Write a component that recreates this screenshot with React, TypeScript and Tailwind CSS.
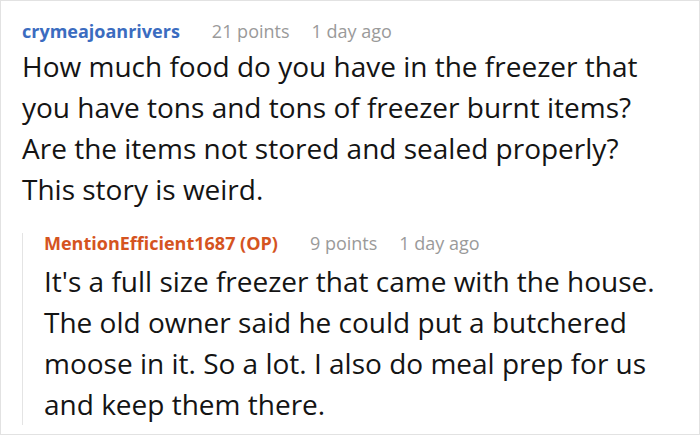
export default function App() {
  return (
    <div
      className="w-[700px] h-[436px] bg-white overflow-hidden"
      style={{ fontFamily: '"Open Sans", "Noto Sans", sans-serif' }}
    >
      <div className="h-[435px] border border-[#e2e2e2] pl-[21px] pt-[18px]">
        {/* parent comment */}
        <div className="flex items-baseline text-[18px] leading-[24px]">
          <span className="font-bold text-[#3b6cc0]">crymeajoanrivers</span>
          <span className="ml-[32px] text-[#9a9a9a]">21 points</span>
          <span className="ml-[22px] text-[#9a9a9a]">1 day ago</span>
        </div>
        <p className="text-[28px] leading-[41px] text-[#141414] mt-[3px]">
          How much food do you have in the freezer that
          <br />
          you have tons and tons of freezer burnt items?
          <br />
          Are the items not stored and sealed properly?
          <br />
          This story is weird.
        </p>

        {/* reply */}
        <div className="mt-[23px] border-l border-[#e4e4e4] pl-[21px]">
          <div className="flex items-baseline text-[18px] leading-[20px]">
            <span className="font-bold text-[#d5541f]">MentionEfficient1687 (OP)</span>
            <span className="ml-[32px] text-[#9a9a9a]">9 points</span>
            <span className="ml-[22px] text-[#9a9a9a]">1 day ago</span>
          </div>
          <p className="text-[28px] leading-[41px] text-[#141414] mt-[8px]">
            It's a full size freezer that came with the house.
            <br />
            The old owner said he could put a butchered
            <br />
            moose in it. So a lot. I also do meal prep for us
            <br />
            and keep them there.
          </p>
        </div>
      </div>
    </div>
  );
}
